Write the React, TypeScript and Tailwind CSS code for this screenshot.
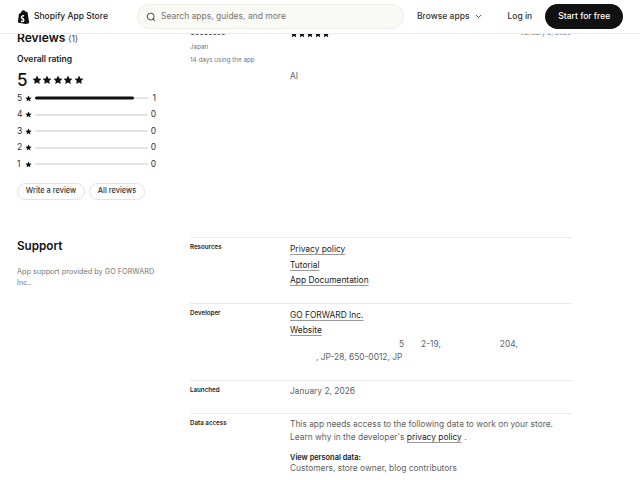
import { ChevronDown, Search } from "lucide-react";

const RATINGS = [
  { label: 5, count: 1, fill: "w-[88%]" },
  { label: 4, count: 0, fill: "w-0" },
  { label: 3, count: 0, fill: "w-0" },
  { label: 2, count: 0, fill: "w-0" },
  { label: 1, count: 0, fill: "w-0" },
];

const Star = ({ size }: { size: number }) => (
  <svg width={size} height={size} viewBox="0 0 20 20" fill="#111111" className="shrink-0">
    <path d="M10 1.2l2.7 5.7 6.2.8-4.6 4.3 1.2 6.2L10 15.1l-5.5 3.1 1.2-6.2L1.1 7.7l6.2-.8z" />
  </svg>
);

const Stars = ({ size, gap }: { size: number; gap: string }) => (
  <div className={`flex ${gap}`}>
    {[0, 1, 2, 3, 4].map((i) => (
      <Star key={i} size={size} />
    ))}
  </div>
);

const Logo = () => (
  <svg width="13" height="14" viewBox="0 0 24 27" className="shrink-0">
    <path d="M17.6 3.2 15.9 3.6C15.4 2 14.5.9 13.2.9 11.3-.6 8 1 6.7 5.9L3.3 7 1 24.200l15 2.800L23 25.400 19.800 4.300z" fill="#111111" />
    <path d="M13.500 10.300l-.8 2.500c-2-1-3.700-.2-3.600.9.100 1.500 4.700 2 4.800 5.900.1 3.500-3.900 5-7 3.200l.8-2.800c1.300 1 3.300 1.300 3.400.1.100-1.700-4-1.900-4.300-5.400-.2-3.700 4.300-6.200 6.700-4.400z" fill="#ffffff" />
  </svg>
);

const Header = () => (
  <header className="sticky top-0 z-10 flex h-[34px] shrink-0 items-center border-b border-[#ebebeb] bg-white pl-[17px]">
    <div className="flex w-[120px] shrink-0 items-center gap-[4px]">
      <Logo />
      <span className="text-[8.5px] font-medium whitespace-nowrap text-[#222222]">Shopify App Store</span>
    </div>
    <div className="flex h-[25px] w-[267px] shrink-0 items-center gap-[5px] rounded-full border border-[#eeeee8] bg-[#f9f9f6] pl-[8px]">
      <Search size={10} strokeWidth={2.5} color="#555555" />
      <span className="text-[8.5px] whitespace-nowrap text-[#777777]">Search apps, guides, and more</span>
    </div>
    <button className="ml-[13px] flex shrink-0 items-center gap-[4px] text-[8.5px] font-medium whitespace-nowrap text-[#333333]">
      Browse apps
      <ChevronDown size={9} strokeWidth={2.5} />
    </button>
    <button className="ml-[25px] shrink-0 text-[8.5px] font-medium whitespace-nowrap text-[#333333]">Log in</button>
    <button className="ml-[13px] h-[25px] w-[78px] shrink-0 rounded-full bg-[#111111] text-[8.5px] font-medium whitespace-nowrap text-white">
      Start for free
    </button>
  </header>
);

const DetailRow = ({
  label,
  className,
  children,
}: {
  label: string;
  className: string;
  children: React.ReactNode;
}) => (
  <div className={`flex border-t border-[#ebebeb] pt-[4px] ${className}`}>
    <div className="w-[100px] shrink-0 text-[6.2px] leading-[10px] font-semibold text-[#222222]">{label}</div>
    <div className="flex-1 text-[8.4px] text-[#616161]">{children}</div>
  </div>
);

const DocLink = ({ children }: { children: React.ReactNode }) => (
  <span className="text-[#222222] underline decoration-[#999999] underline-offset-2">{children}</span>
);

export default function App() {
  return (
    <div className="flex h-[480px] w-[640px] flex-col overflow-hidden bg-white font-['Inter',sans-serif]">
      <Header />

      <main className="grid grid-cols-[173px_382px] pl-[17px]">
        {/* Reviews */}
        <section className="h-[203px]">
          <h2 className="mt-[-4px] text-[12px] leading-[16px] font-semibold text-[#111111]">
            Reviews <span className="text-[8.5px] font-normal text-[#444444]">(1)</span>
          </h2>
          <div className="mt-[6px] text-[8.5px] leading-[12px] font-semibold text-[#222222]">Overall rating</div>
          <div className="mt-[4px] flex items-center gap-[4px]">
            <span className="text-[17px] leading-[22px] font-medium text-[#111111]">5</span>
            <Stars size={10} gap="gap-[0.500px]" />
          </div>
          <div className="mt-[-1px] flex w-[139px] flex-col">
            {RATINGS.map((rating) => (
              <div key={rating.label} className="flex h-[16.500px] items-center text-[8.5px] text-[#333333]">
                <span className="w-[8px]">{rating.label}</span>
                <Star size={7} />
                <div className="ml-[3px] h-[2px] flex-1 rounded-full bg-[#e3e3e3]">
                  <div className={`h-[3px] -translate-y-[0.500px] rounded-full bg-[#111111] ${rating.fill}`} />
                </div>
                <span className="w-[8px] text-right">{rating.count}</span>
              </div>
            ))}
          </div>
          <div className="mt-[10px] flex gap-[4px]">
            <button className="h-[17px] w-[68px] rounded-full border border-[#e3e3e3] text-[7.4px] font-medium whitespace-nowrap text-[#333333]">
              Write a review
            </button>
            <button className="h-[17px] w-[56px] rounded-full border border-[#e3e3e3] text-[7.4px] font-medium whitespace-nowrap text-[#333333]">
              All reviews
            </button>
          </div>
        </section>

        {/* Single review */}
        <section className="h-[203px] overflow-hidden">
          <div className="flex">
            <div className="w-[100px] shrink-0">
              <div className="mt-[-5px] text-[6.3px] leading-[9px] font-semibold text-[#333333]">GO3C3C3C</div>
              <div className="mt-[5px] text-[6.3px] leading-[9px] text-[#777777]">Japan</div>
              <div className="mt-[4px] text-[6.3px] leading-[9px] text-[#777777]">14 days using the app</div>
            </div>
            <div className="flex-1">
              <div className="mt-[-6px] flex items-start justify-between pr-[1px]">
                <div className="mt-[2px]">
                  <Stars size={8} gap="gap-0" />
                </div>
                <span className="mt-[1px] text-[6.5px] leading-[9px] text-[#777777]">January 2, 2026</span>
              </div>
              <div className="mt-[32px] text-[8.4px] text-[#616161]">AI</div>
            </div>
          </div>
        </section>

        {/* Support */}
        <section>
          <h2 className="mt-[1px] text-[11.7px] leading-[16px] font-semibold text-[#111111]">Support</h2>
          <p className="mt-[12px] w-[142px] text-[7.3px] leading-[11px] text-[#777777]">App support provided by GO FORWARD Inc..</p>
        </section>

        <section className="flex flex-col">
          <DetailRow label="Resources" className="h-[66px]">
            <div className="flex flex-col leading-[15.500px]">
              <DocLink>Privacy policy</DocLink>
              <DocLink>Tutorial</DocLink>
              <DocLink>App Documentation</DocLink>
            </div>
          </DetailRow>
          <DetailRow label="Developer" className="h-[77px]">
            <div className="flex flex-col leading-[15px]">
              <DocLink>GO FORWARD Inc.</DocLink>
              <DocLink>Website</DocLink>
            </div>
            <div className="leading-[13px] whitespace-nowrap">
              <div className="pl-[109px]">
                5<span className="ml-[17px]">2-19,</span>
                <span className="ml-[59px]">204,</span>
              </div>
              <div className="pl-[26px]">, JP-28, 650-0012, JP</div>
            </div>
          </DetailRow>
          <DetailRow label="Launched" className="h-[33px]">
            <div className="leading-[13px]">January 2, 2026</div>
          </DetailRow>
          <DetailRow label="Data access" className="h-[66px]">
            <div className="leading-[12.500px] whitespace-nowrap">
              This app needs access to the following data to work on your store.
              <br />
              Learn why in the developer's <DocLink>privacy policy</DocLink> .
            </div>
            <div className="mt-[8.500px] text-[7.4px] leading-[11px] font-semibold text-[#222222]">View personal data:</div>
            <div className="leading-[11px] whitespace-nowrap">Customers, store owner, blog contributors</div>
          </DetailRow>
        </section>
      </main>
    </div>
  );
}
